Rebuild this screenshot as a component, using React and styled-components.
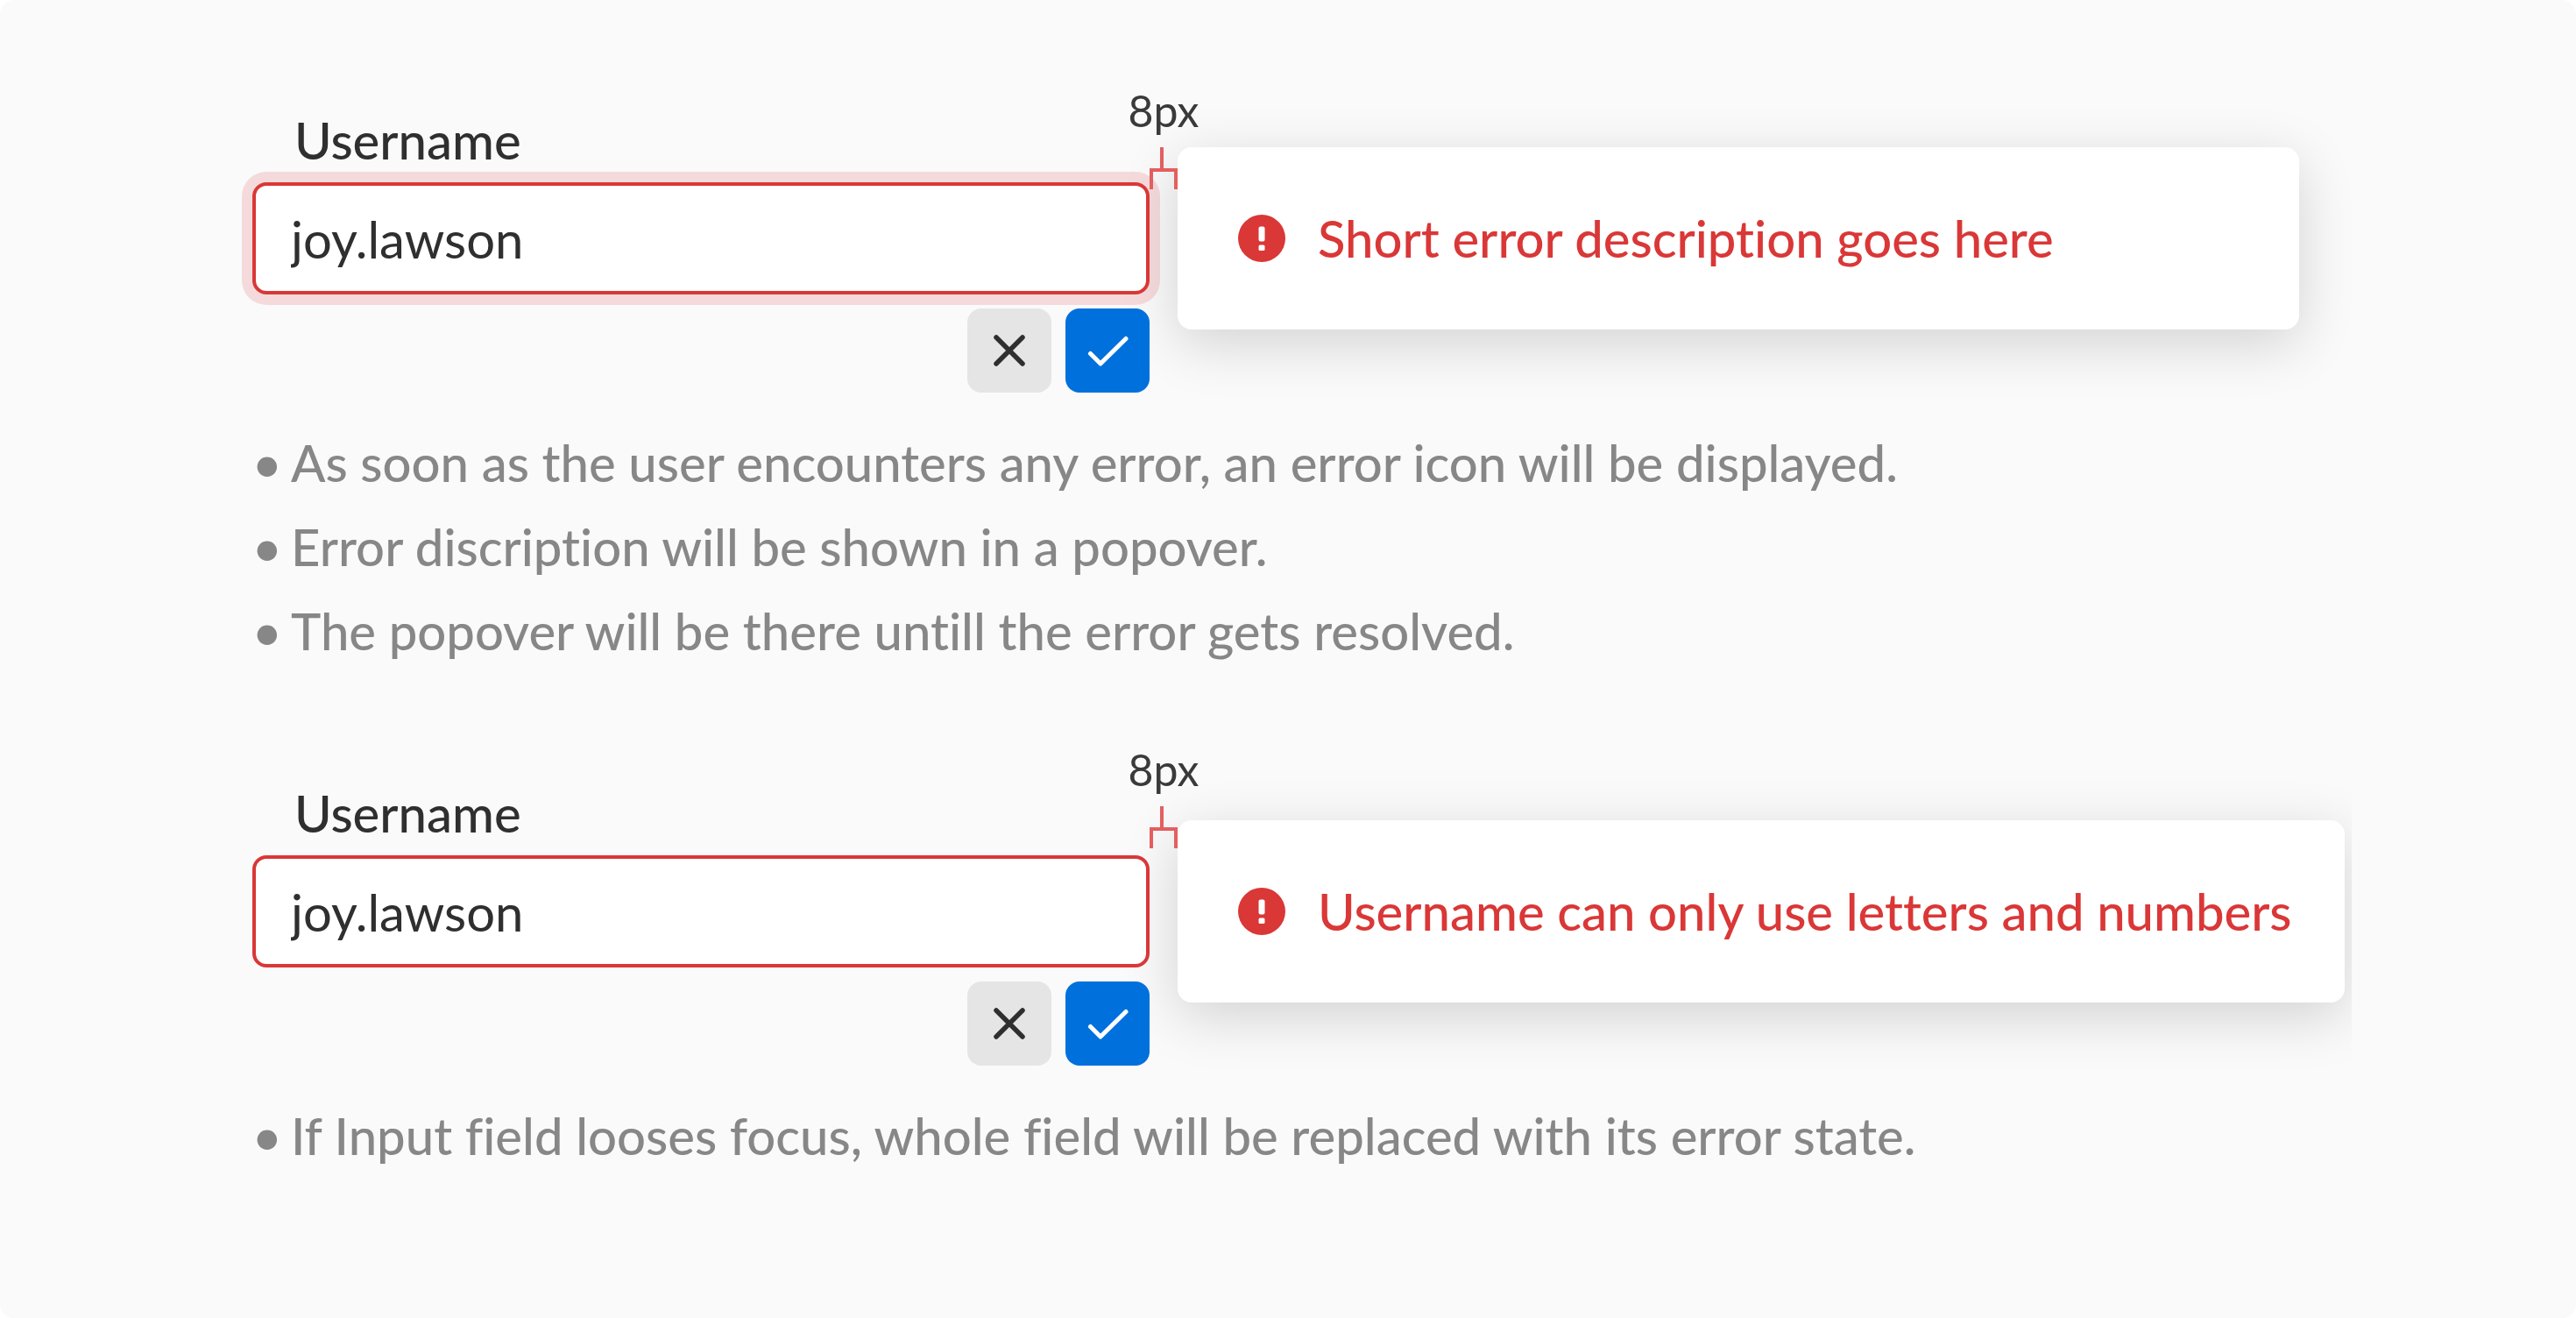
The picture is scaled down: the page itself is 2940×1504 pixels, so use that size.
import React, { useId } from 'react';
import styled, { createGlobalStyle } from 'styled-components';

const GlobalStyle = createGlobalStyle`
  * { box-sizing: border-box; }
  body {
    margin: 0;
    background: #ffffff;
    font-family: Lato, "Open Sans", sans-serif;
    font-variant-ligatures: none;
  }
`;

const Page = styled.main`
  min-height: 100vh;
  padding: 0 256px;
  background: #fafafa;
  border-radius: 16px;
`;

const Examples = styled.div`
  display: flex;
  flex-direction: column;
  gap: 128px;
  padding: 128px 0 0 32px;
  overflow-x: clip;
`;

const Label = styled.label`
  display: block;
  padding-left: 48px;
  margin-bottom: 16px;
  font-size: 58px;
  font-weight: 500;
  line-height: 64px;
  color: #2f2f2f;
`;

const FieldRow = styled.div`
  display: flex;
  align-items: center;
  gap: 32px;
`;

const FieldColumn = styled.div`
  width: 1024px;
`;

const InputWrap = styled.div`
  position: relative;
  z-index: 1;
  width: 1024px;
  flex: none;
`;

const TextInput = styled.input`
  display: block;
  width: 100%;
  height: 128px;
  padding: 0 40px;
  border: 4px solid #da3737;
  border-radius: 16px;
  outline: none;
  background: #ffffff;
  box-shadow: ${(p) => (p.$focused ? '0 0 0 12px rgba(218, 28, 44, 0.14)' : 'none')};
  font-family: inherit;
  font-size: 58px;
  color: #2f2f2f;
`;

const Popover = styled.div`
  display: flex;
  align-items: center;
  gap: 32px;
  min-width: 1280px;
  height: 208px;
  margin: -40px 0;
  padding: 0 60px 0 64px;
  border-radius: 16px;
  background: #ffffff;
  box-shadow: 0 16px 64px rgba(0, 0, 0, 0.16);
  font-size: 58px;
  font-weight: 500;
  line-height: 64px;
  white-space: nowrap;
  color: #da3737;
`;

const Spacing = styled.div`
  position: absolute;
  left: 100%;
  bottom: ${(p) => (p.$overlap ? '120px' : '136px')};
  display: flex;
  flex-direction: column;
  align-items: center;
  gap: 10px;
  width: 32px;
  font-size: 50px;
  line-height: 64px;
  color: #3a3a3a;
`;

const Actions = styled.div`
  position: relative;
  z-index: 1;
  display: flex;
  justify-content: flex-end;
  gap: 16px;
  margin-top: 16px;
`;

const IconButton = styled.button`
  display: block;
  width: 96px;
  height: 96px;
  padding: 0;
  border: 0;
  border-radius: 16px;
  background: ${(p) => (p.$primary ? '#0070dd' : '#e5e5e5')};
  color: ${(p) => (p.$primary ? '#ffffff' : '#2f2f2f')};
`;

const Icon = styled.svg`
  display: block;
  flex: none;
`;

const Notes = styled.ul`
  margin: 32px 0 0;
  padding: 0;
  list-style: none;
  font-size: 58px;
  font-weight: 500;
  line-height: 96px;
  color: #878787;
`;

const Note = styled.li`
  display: flex;
`;

const Bullet = styled.span`
  flex: none;
  width: 44px;
`;

function ErrorIcon() {
  return (
    <Icon width="64" height="64" viewBox="0 0 64 64" aria-hidden="true">
      <circle cx="32" cy="32" r="27" fill="#da3737" />
      <rect x="28.5" y="18.5" width="7" height="17" rx="2" fill="#fff" />
      <rect x="28.5" y="39.5" width="7" height="6.5" rx="1.5" fill="#fff" />
    </Icon>
  );
}

function CloseIcon() {
  return (
    <Icon width="96" height="96" viewBox="0 0 96 96" fill="none" stroke="currentColor" strokeWidth="5.5" strokeLinecap="round" aria-hidden="true">
      <path d="M33 33L63 63M63 33L33 63" />
    </Icon>
  );
}

function CheckIcon() {
  return (
    <Icon width="96" height="96" viewBox="0 0 96 96" fill="none" stroke="currentColor" strokeWidth="5" strokeLinecap="round" strokeLinejoin="round" aria-hidden="true">
      <path d="M28.5 51.5L40 63L69 34.5" />
    </Icon>
  );
}

function Bracket() {
  return (
    <Icon width="32" height="48" viewBox="0 0 32 48" fill="none" stroke="#e35f5f" strokeWidth="4" aria-hidden="true">
      <path d="M14 0V26M2 48V26H30V48" />
    </Icon>
  );
}

function Example({ error, focused, notes }) {
  const id = useId();
  return (
    <section>
      <Label htmlFor={id}>Username</Label>
      <FieldRow>
        <InputWrap>
          <TextInput
            id={id}
            type="text"
            defaultValue="joy.lawson"
            spellCheck={false}
            aria-invalid="true"
            aria-describedby={`${id}-error`}
            $focused={focused}
          />
          <Spacing $overlap={focused}>
            <span>8px</span>
            <Bracket />
          </Spacing>
        </InputWrap>
        <Popover id={`${id}-error`} role="alert">
          <ErrorIcon />
          <span>{error}</span>
        </Popover>
      </FieldRow>
      <FieldColumn>
        <Actions>
          <IconButton type="button" aria-label="Cancel"><CloseIcon /></IconButton>
          <IconButton type="button" aria-label="Save" $primary><CheckIcon /></IconButton>
        </Actions>
      </FieldColumn>
      <Notes>
        {notes.map((note) => (
          <Note key={note}>
            <Bullet>•</Bullet>
            <span>{note}</span>
          </Note>
        ))}
      </Notes>
    </section>
  );
}

export default function App() {
  return (
    <>
      <GlobalStyle />
      <Page>
        <Examples>
          <Example
            focused
            error="Short error description goes here"
            notes={[
              'As soon as the user encounters any error, an error icon will be displayed.',
              'Error discription will be shown in a popover.',
              'The popover will be there untill the error gets resolved.',
            ]}
          />
          <Example
            error="Username can only use letters and numbers"
            notes={['If Input field looses focus, whole field will be replaced with its error state.']}
          />
        </Examples>
      </Page>
    </>
  );
}
